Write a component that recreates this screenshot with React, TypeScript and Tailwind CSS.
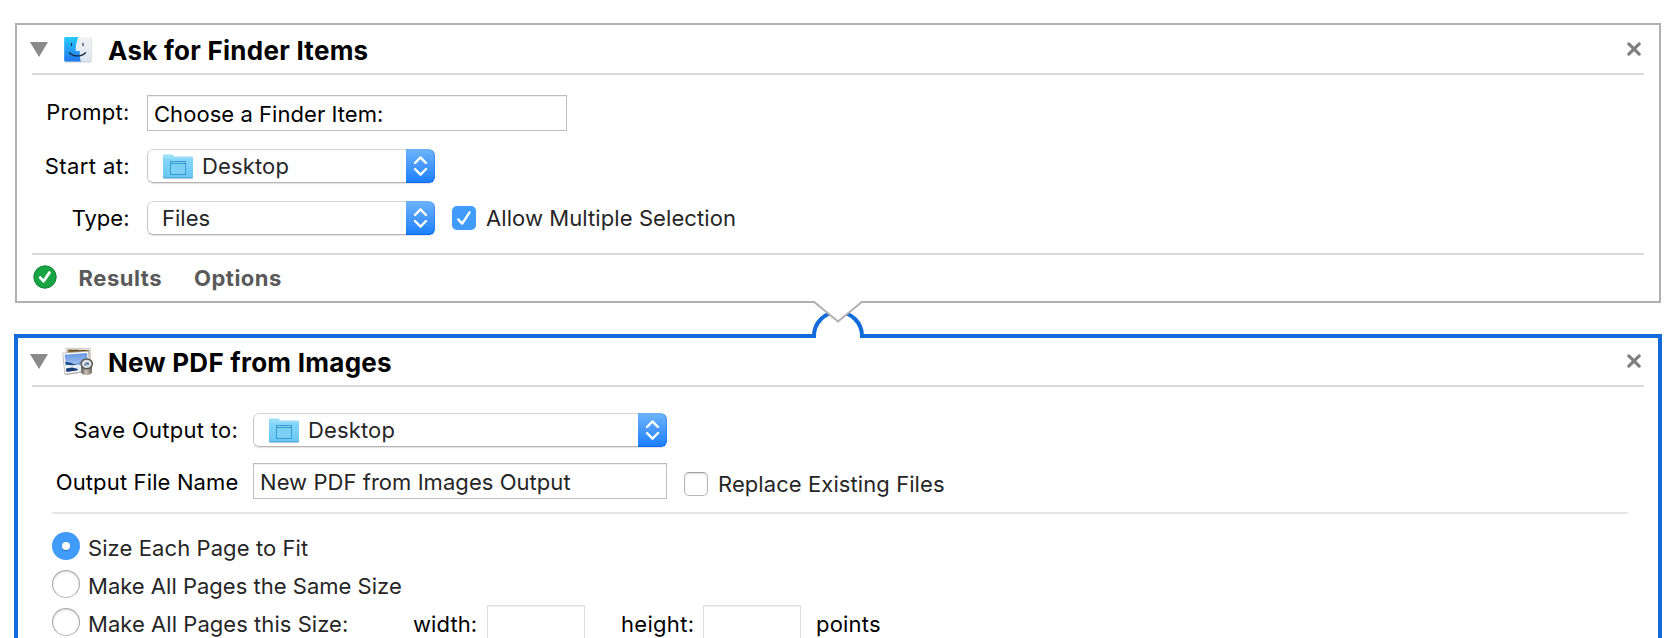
import React from "react";
import type { ReactNode } from "react";

function Disclosure() {
  return (
    <svg width="18" height="15" viewBox="0 0 18 15" className="shrink-0">
      <path d="M0 0H18L9 15Z" fill="#8a8a8a" />
    </svg>
  );
}

function CloseIcon() {
  return (
    <svg width="14" height="14" viewBox="0 0 14 14" className="shrink-0">
      <path d="M1.8 1.8L12.2 12.2M12.2 1.8L1.8 12.2" stroke="#7f7f7f" strokeWidth="3.1" strokeLinecap="round" />
    </svg>
  );
}

function FinderIcon() {
  return (
    <svg width="33" height="30" viewBox="0 0 33 30" className="shrink-0">
      <defs>
        <linearGradient id="finderBlue" x1="0" y1="0" x2="0" y2="1">
          <stop offset="0" stopColor="#26cbfc" />
          <stop offset="1" stopColor="#2376ee" />
        </linearGradient>
        <linearGradient id="finderWhite" x1="0" y1="0" x2="0" y2="1">
          <stop offset="0" stopColor="#f3f2f3" />
          <stop offset="1" stopColor="#d6e5f4" />
        </linearGradient>
      </defs>
      <rect x="2.6" y="3.2" width="27" height="25.2" rx="1.6" fill="#000" opacity="0.2" />
      <rect x="2.2" y="3" width="27" height="24.6" rx="1.4" fill="url(#finderWhite)" />
      <path d="M3.6 3H16.4C14.6 7.5 13.7 11.5 13.6 16.9H17.8C17.6 21 17.9 24.5 18.8 27.6H3.6Q2.2 27.6 2.2 26.2V4.4Q2.2 3 3.6 3Z" fill="url(#finderBlue)" />
      <path d="M9.5 9.4V11.6M21 9.4V11.6" stroke="#17334f" strokeWidth="1.2" strokeLinecap="round" />
      <path d="M7.4 18.8C11.2 23 19.7 23 23.5 18.8" fill="none" stroke="#16304c" strokeWidth="1.3" strokeLinecap="round" />
    </svg>
  );
}

function PreviewIcon() {
  return (
    <svg width="33" height="30" viewBox="0 0 33 30" className="shrink-0">
      <defs>
        <linearGradient id="previewSky" x1="0" y1="0" x2="0" y2="1">
          <stop offset="0" stopColor="#6796e2" />
          <stop offset="1" stopColor="#c3dcf8" />
        </linearGradient>
        <linearGradient id="previewLoupe" x1="0" y1="0" x2="1" y2="0">
          <stop offset="0" stopColor="#5c534c" />
          <stop offset="0.45" stopColor="#c9c2ba" />
          <stop offset="1" stopColor="#6d635a" />
        </linearGradient>
      </defs>
      <path d="M4 1.2L28.6 1.6L28.2 22L4.4 22Z" fill="#f4f2ee" stroke="#b9b6b0" strokeWidth="0.7" />
      <path d="M5.6 2.6L27.2 3L27 19L6 19Z" fill="#8a6a3c" />
      <path d="M8 3L11 4.2L14 3.2L18 4.4L22 3.4L26 4.6" stroke="#54401f" strokeWidth="0.9" fill="none" />
      <path d="M1 6.8L26.8 4.8L28.2 24.6L3 28.2Z" fill="#000" opacity="0.3" />
      <path d="M0.8 6.1L26.6 4.2L27.8 23.6L2.8 27.2Z" fill="#fdfdfd" stroke="#a9a9a9" strokeWidth="0.7" />
      <path d="M2.6 7.8L25.1 6.1L26.2 22L4.4 25Z" fill="url(#previewSky)" />
      <path d="M3.5 16.5L25.8 15L26.2 22L4.4 25Z" fill="#e4eff8" />
      <path d="M3.3 15C7 14.6 10 16.4 15 17.6L11 18.2L3.7 17.8Z" fill="#1d4c8c" />
      <path d="M4 21.4L10 20.4L16 22L15 23.6L4.4 25Z" fill="#173e78" />
      <path d="M12 16.3L21 14.5V17L16 18Z" fill="#77a3cf" />
      <path d="M19.2 18V24.8C19.2 29.2 30 29.2 30 24.8V18Z" fill="url(#previewLoupe)" />
      <ellipse cx="24.7" cy="16.9" rx="5.6" ry="4.9" fill="#d9dde1" stroke="#5b5752" strokeWidth="1.5" />
      <ellipse cx="24.7" cy="17" rx="3.4" ry="2.9" fill="#a9bfd8" stroke="#fff" strokeWidth="0.7" />
      <path d="M22.4 18.4L24.6 16.2L27 17" stroke="#334a66" strokeWidth="1" fill="none" />
    </svg>
  );
}

function FolderIcon() {
  return (
    <svg width="32" height="28" viewBox="0 0 32 28" className="mt-[2px] shrink-0">
      <defs>
        <linearGradient id="folderFace" x1="0" y1="0" x2="0" y2="1">
          <stop offset="0" stopColor="#86d6fa" />
          <stop offset="1" stopColor="#67c6f3" />
        </linearGradient>
      </defs>
      <path d="M1.4 4H30.6V26.2H1.4Z" fill="#000" opacity="0.13" />
      <path d="M1 2.5Q1 1.4 2.1 1.4H9.6Q10.6 1.4 11.2 2.2L12.2 3.4H29.8Q31 3.4 31 4.6V8H1Z" fill="#98def9" />
      <path d="M1 5.6H31V24.2Q31 25.2 30 25.2H2Q1 25.2 1 24.2Z" fill="url(#folderFace)" />
      <path d="M1.4 24.7H30.6" stroke="#4aa6d6" strokeWidth="0.9" />
      <rect x="8.5" y="8.5" width="15" height="13" fill="#7ccff5" stroke="#3a9bd0" strokeWidth="1" />
      <path d="M9 10.5H23" stroke="#3a9bd0" strokeWidth="1" />
    </svg>
  );
}

function PopUp({ width, capWidth, children }: { width: string; capWidth: string; children: ReactNode }) {
  return (
    <div className={`flex h-[34px] overflow-hidden rounded-[6px] shadow-[0_1px_1px_rgba(0,0,0,0.12)] ${width}`}>
      <div className="flex flex-1 items-center rounded-l-[6px] border border-r-0 border-t-[#d4d4d4] border-b-[#b4b4b4] border-l-[#c8c8c8] pl-[14px] text-[#262626]">
        {children}
      </div>
      <div
        className={`flex items-center justify-center rounded-r-[6px] bg-linear-to-b from-[#6cb3fa] to-[#157efb] shadow-[inset_0_-1px_0_#0a66f5,inset_-1px_0_0_rgba(20,100,240,0.35)] ${capWidth}`}
      >
        <svg width="15" height="22" viewBox="0 0 15 22">
          <path d="M2 8L7.5 2.4L13 8M2 14L7.5 19.6L13 14" fill="none" stroke="#fff" strokeWidth="2.4" strokeLinecap="round" strokeLinejoin="round" />
        </svg>
      </div>
    </div>
  );
}

function Field({ className, children }: { className: string; children?: ReactNode }) {
  return (
    <div className={`flex h-9 items-center border bg-white pt-[2px] shadow-[inset_0_1px_0_#f0f0f0] ${className}`}>{children}</div>
  );
}

function Radio({ checked }: { checked?: boolean }) {
  return checked ? (
    <span className="flex size-7 shrink-0 items-center justify-center rounded-full bg-[#409bfb]">
      <span className="size-2 rounded-full bg-white shadow-[0_1px_1px_rgba(0,50,140,0.35)]" />
    </span>
  ) : (
    <span className="size-7 shrink-0 rounded-full border border-[#a9a9a9] border-b-[#bdbdbd] bg-white shadow-[inset_0_1px_2px_rgba(0,0,0,0.18)]" />
  );
}

export default function App() {
  return (
    <div className="relative h-[638px] w-full overflow-hidden bg-white pt-[23px] font-['Inter','Liberation_Sans',sans-serif] text-[22px] leading-7 whitespace-nowrap text-black">
      <section className="ml-[15px] h-[280px] w-[1646px] border-2 border-[#b0b0b0] px-[15px]">
        <header className="flex h-12 items-center pr-[3px]">
          <div className="-ml-[2px] flex pt-[1px]">
            <Disclosure />
          </div>
          <div className="ml-[14px]">
            <FinderIcon />
          </div>
          <h1 className="ml-[13px] pt-[3px] text-[26px] font-bold tracking-[0.26px]">Ask for Finder Items</h1>
          <div className="ml-auto">
            <CloseIcon />
          </div>
        </header>
        <div className="h-[2px] bg-[#d9d9d9]" />
        <div className="flex h-[178px] flex-col gap-[18px] pt-5">
          <div className="flex h-9 items-center gap-[17px]">
            <span className="w-[98px] pr-[0.5px] pb-[2px] text-right tracking-[0.25px]">Prompt:</span>
            <Field className="w-[420px] border-[#bdbdbd] pl-[6px] tracking-[0.05px]">Choose a Finder Item:</Field>
          </div>
          <div className="flex h-[34px] items-center gap-[17px]">
            <span className="w-[98px] text-right tracking-[0.4px]">Start at:</span>
            <PopUp width="w-[288px]" capWidth="w-[29px]">
              <FolderIcon />
              <span className="ml-[8px] tracking-[0.15px]">Desktop</span>
            </PopUp>
          </div>
          <div className="flex h-[34px] items-center gap-[17px]">
            <span className="w-[98px] pr-[0.5px] text-right">Type:</span>
            <PopUp width="w-[288px]" capWidth="w-[29px]">
              <span>Files</span>
            </PopUp>
            <div className="flex items-center text-[#262626]">
              <span className="flex size-6 items-center justify-center rounded-[5px] bg-[#409bfb]">
                <svg width="16" height="16" viewBox="0 0 16 16">
                  <path d="M2.2 9.4L6.2 13.6L13.6 2.4" fill="none" stroke="#fff" strokeWidth="2.4" strokeLinecap="round" strokeLinejoin="round" />
                </svg>
              </span>
              <span className="ml-[10px] tracking-[0.08px]">Allow Multiple Selection</span>
            </div>
          </div>
        </div>
        <div className="h-[2px] bg-[#d9d9d9]" />
        <footer className="flex h-[46px] items-center font-bold text-[#595959]">
          <svg width="24" height="24" viewBox="0 0 24 24" className="mb-[2px] ml-[1px]">
            <circle cx="12" cy="12" r="11.2" fill="#17a443" stroke="#128237" strokeWidth="1" />
            <path d="M7.2 12.6L10.6 16.2L16.4 7.6" fill="none" stroke="#fff" strokeWidth="2.8" strokeLinecap="round" strokeLinejoin="round" />
          </svg>
          <span className="ml-[21.5px] w-[115.5px] tracking-[0.55px]">Results</span>
          <span className="tracking-[0.5px]">Options</span>
        </footer>
      </section>

      <section className="mt-[31px] ml-[14px] h-[340px] w-[1648px] border-4 border-[#126bd8] px-[14px]">
        <header className="flex h-[47px] items-center pr-[3px]">
          <div className="-ml-[2px]">
            <Disclosure />
          </div>
          <div className="ml-[14px]">
            <PreviewIcon />
          </div>
          <h1 className="ml-[13px] pt-[2px] text-[26px] font-bold tracking-[0.26px]">New PDF from Images</h1>
          <div className="ml-auto pb-[2px]">
            <CloseIcon />
          </div>
        </header>
        <div className="h-[2px] bg-[#d9d9d9]" />
        <div className="flex flex-col gap-4 pt-[26px]">
          <div className="flex h-[34px] items-center gap-[14px]">
            <span className="w-[207px] pr-[1px] text-right tracking-[0.27px]">Save Output to:</span>
            <PopUp width="w-[414px]" capWidth="w-[29px]">
              <FolderIcon />
              <span className="ml-[8px] tracking-[0.15px]">Desktop</span>
            </PopUp>
          </div>
          <div className="flex h-9 items-center gap-[14px]">
            <span className="w-[207px] pt-[2px] pr-[0.5px] text-right tracking-[0.14px]">Output File Name</span>
            <Field className="w-[414px] border-[#bdbdbd] pl-[6px] tracking-[0.05px] text-[#262626]">New PDF from Images Output</Field>
            <div className="ml-[3px] flex items-center pt-[6px] text-[#262626]">
              <span className="size-6 rounded-[5px] border border-[#b9b9b9] border-t-[#a0a0a0] bg-white shadow-[inset_0_1px_2px_rgba(0,0,0,0.15)]" />
              <span className="ml-[10px] tracking-[0.08px]">Replace Existing Files</span>
            </div>
          </div>
        </div>
        <div className="mt-[13px] mr-4 ml-5 h-[2px] bg-[#e4e4e4]" />
        <div className="mt-[18px] ml-5 flex flex-col gap-[10px] text-[#262626]">
          <div className="flex h-7 items-center gap-2">
            <Radio checked />
            <span className="pt-1 tracking-[0.09px]">Size Each Page to Fit</span>
          </div>
          <div className="flex h-7 items-center gap-2">
            <Radio />
            <span className="pt-1 tracking-[0.01px]">Make All Pages the Same Size</span>
          </div>
          <div className="flex h-7 items-center">
            <Radio />
            <span className="ml-2 w-[325px] pt-1 tracking-[0.05px]">Make All Pages this Size:</span>
            <span className="w-[74px] pt-1 tracking-[0.1px] text-black">width:</span>
            <Field className="mt-[2px] w-[98px] border-[#dedede]" />
            <span className="ml-9 w-[82px] pt-1 tracking-[0.3px] text-black">height:</span>
            <Field className="mt-[2px] w-[98px] border-[#dedede]" />
            <span className="ml-[15px] pt-1 tracking-[0.2px] text-black">points</span>
          </div>
        </div>
      </section>

      <svg width="56" height="40" viewBox="0 0 56 40" className="absolute top-[300px] left-[810px]">
        <path d="M6 34V40H50V34Z" fill="#fff" />
        <path d="M4 38V36A24 24 0 0 1 52 36V38" fill="#fff" stroke="#126bd8" strokeWidth="4" />
        <path d="M3 0L28 22L53 0Z" fill="#fff" />
        <path d="M0 2H4.2L28 21.5L51.8 2H56" fill="none" stroke="#b0b0b0" strokeWidth="2" />
      </svg>
    </div>
  );
}
